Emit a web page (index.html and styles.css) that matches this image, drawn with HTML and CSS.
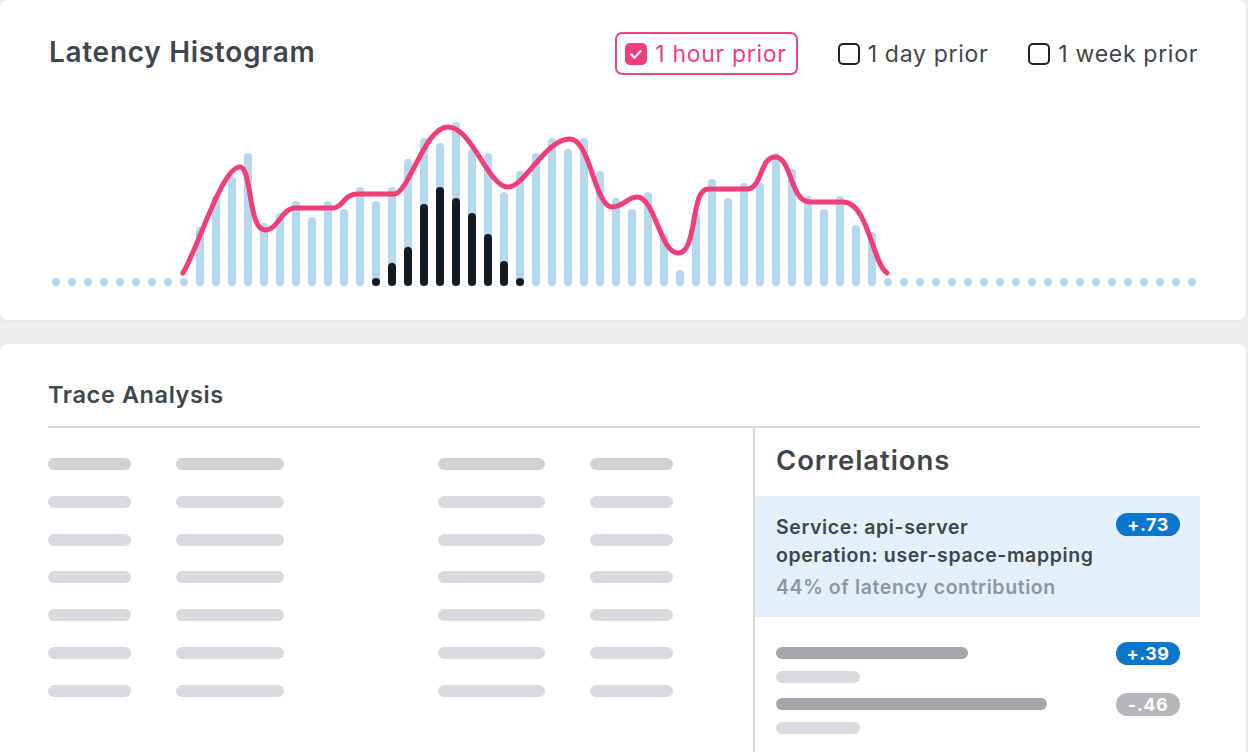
FILE: index.html
```html
<!DOCTYPE html>
<html>
<head>
<meta charset="utf-8">
<link rel="stylesheet" href="styles.css">
</head>
<body>
<div class="page">
  <section class="card card-hist">
    <header class="hist-head">
      <h1 class="title">Latency Histogram</h1>
      <div class="options">
        <label class="opt opt-on"><span class="box box-on"><svg viewBox="0 0 22 22" width="22" height="22"><path d="M6.2 11.4l3.3 3.3 6.3-6.6" fill="none" stroke="#fff" stroke-width="2.2" stroke-linecap="round" stroke-linejoin="round"/></svg></span><span class="opt-text">1 hour prior</span></label>
        <label class="opt"><span class="box"></span><span class="opt-text">1 day prior</span></label>
        <label class="opt"><span class="box"></span><span class="opt-text">1 week prior</span></label>
      </div>
    </header>
    <svg class="hist" viewBox="0 100 1246 200" width="1246" height="200">
      <g fill="#b5d8f0">
        <circle cx="56" cy="282" r="4"/><circle cx="72" cy="282" r="4"/><circle cx="88" cy="282" r="4"/><circle cx="104" cy="282" r="4"/><circle cx="120" cy="282" r="4"/><circle cx="136" cy="282" r="4"/><circle cx="152" cy="282" r="4"/><circle cx="168" cy="282" r="4"/><circle cx="184" cy="282" r="4"/>
        <circle cx="888" cy="282" r="4"/><circle cx="904" cy="282" r="4"/><circle cx="920" cy="282" r="4"/><circle cx="936" cy="282" r="4"/><circle cx="952" cy="282" r="4"/><circle cx="968" cy="282" r="4"/><circle cx="984" cy="282" r="4"/><circle cx="1000" cy="282" r="4"/><circle cx="1016" cy="282" r="4"/><circle cx="1032" cy="282" r="4"/><circle cx="1048" cy="282" r="4"/><circle cx="1064" cy="282" r="4"/><circle cx="1080" cy="282" r="4"/><circle cx="1096" cy="282" r="4"/><circle cx="1112" cy="282" r="4"/><circle cx="1128" cy="282" r="4"/><circle cx="1144" cy="282" r="4"/><circle cx="1160" cy="282" r="4"/><circle cx="1176" cy="282" r="4"/><circle cx="1192" cy="282" r="4"/>
      </g>
      <path fill="none" stroke="#b5d8f0" stroke-width="8" stroke-linecap="round" d="M200 231V282 M216 199V282 M232 180V282 M248 157V282 M264 227V282 M280 217V282 M296 205V282 M312 221V282 M328 205V282 M344 213V282 M360 191V282 M376 205V282 M392 191V282 M408 163V282 M424 142V282 M440 147V282 M456 126V282 M472 153V282 M488 157V282 M504 196V282 M520 175V282 M536 157V282 M552 142V282 M568 153V282 M584 142V282 M600 175V282 M616 202V282 M632 213V282 M648 196V282 M664 237V282 M680 274V282 M696 217V282 M712 183V282 M728 202V282 M744 187V282 M760 187V282 M776 157V282 M792 173V282 M808 200V282 M824 213V282 M840 200V282 M856 229V282 M872 236V282"/>
      <path fill="none" stroke="#151c21" stroke-width="8" stroke-linecap="round" d="M392 267V282 M408 251V282 M424 208V282 M440 191V282 M456 202V282 M472 217V282 M488 238V282 M504 265V282"/>
      <circle cx="376" cy="282" r="4" fill="#151c21"/>
      <circle cx="520" cy="282" r="4" fill="#151c21"/>
      <path fill="none" stroke="#f23d78" stroke-width="5" stroke-linecap="round" stroke-linejoin="round" d="M183 273 C198 248, 222 167, 240 167 C252 167, 248 230, 265 230 C278 230, 282 208, 295 208 L333 208 C343 208, 343 194, 358 194 L395 194 C410 190, 425 127, 448 127 C472 127, 488 187, 508 187 C525 187, 545 139, 570 139 C590 139, 595 207, 612 207 C623 207, 628 197, 637 197 C655 197, 660 253, 678 253 C698 253, 690 189, 708 189 L747 189 C762 189, 760 157, 775 157 C792 157, 790 202, 810 202 L843 202 C868 202, 872 262, 887 273"/>
    </svg>
  </section>

  <section class="card card-trace">
    <h2 class="sub">Trace Analysis</h2>
    <div class="trace-body">
      <div class="table">
        <span class="sk c1 dark"></span><span class="sk c2 dark"></span><span class="sk c3 dark"></span><span class="sk c4 dark"></span>
        <span class="sk c1"></span><span class="sk c2"></span><span class="sk c3"></span><span class="sk c4"></span>
        <span class="sk c1"></span><span class="sk c2"></span><span class="sk c3"></span><span class="sk c4"></span>
        <span class="sk c1"></span><span class="sk c2"></span><span class="sk c3"></span><span class="sk c4"></span>
        <span class="sk c1"></span><span class="sk c2"></span><span class="sk c3"></span><span class="sk c4"></span>
        <span class="sk c1"></span><span class="sk c2"></span><span class="sk c3"></span><span class="sk c4"></span>
        <span class="sk c1"></span><span class="sk c2"></span><span class="sk c3"></span><span class="sk c4"></span>
      </div>
      <aside class="corr">
        <h3 class="corr-title">Correlations</h3>
        <div class="corr-hi">
          <div class="corr-text">
            <div class="corr-line">Service: api-server</div>
            <div class="corr-line">operation: user-space-mapping</div>
            <div class="corr-line corr-muted">44% of latency contribution</div>
          </div>
          <span class="badge badge-blue">+.73</span>
        </div>
        <div class="corr-sk">
          <span class="bar-dark w1"></span><span class="badge badge-blue badge-mid">+.39</span>
          <span class="bar-light"></span>
        </div>
        <div class="corr-sk corr-sk2">
          <span class="bar-dark w2"></span><span class="badge badge-gray badge-mid">-.46</span>
          <span class="bar-light"></span>
        </div>
      </aside>
    </div>
  </section>
</div>
</body>
</html>
```

FILE: styles.css
```css
* { box-sizing: border-box; }
html, body { margin: 0; padding: 0; }
body {
  background: #eeeeee;
  font-family: Inter, "Liberation Sans", sans-serif;
  color: #3e464c;
  width: 1248px;
  height: 752px;
  overflow: hidden;
}
.page { width: 1246px; }

.card {
  background: #ffffff;
  border-radius: 8px;
  box-shadow: 0 1px 4px rgba(0, 0, 0, 0.05);
}
.card-hist { height: 320px; }

.hist-head {
  display: flex;
  align-items: center;
  justify-content: space-between;
  height: 75px;
  padding: 32px 48px 0 49px;
}
.title {
  margin: -4px 0 0 0;
  font-size: 28px;
  line-height: 32px;
  font-weight: 600;
  letter-spacing: 0.7px;
  color: #3f474d;
}
.options { display: flex; align-items: center; gap: 40px; }
.opt {
  display: flex;
  align-items: center;
  height: 43px;
  font-size: 23px;
  line-height: 28px;
  letter-spacing: 0.7px;
  color: #3e464c;
}
.opt-on {
  padding: 0 9px 0 8px;
  border: 2px solid #f0467f;
  border-radius: 7px;
  color: #f0407a;
}
.box {
  width: 22px;
  height: 22px;
  border: 2px solid #1d2429;
  border-radius: 5px;
  margin-right: 8px;
  flex: none;
}
.box svg { display: block; margin: -2px; }
.box-on { background: #f23d78; border-color: #f23d78; }

.hist { display: block; margin-top: 25px; }

.card-trace {
  margin-top: 24px;
  height: 440px;
  border-radius: 8px 8px 0 0;
  padding: 37px 46px 0 48px;
}
.sub {
  margin: 0;
  font-size: 23.5px;
  line-height: 28px;
  font-weight: 600;
  letter-spacing: 0.6px;
  color: #3f474d;
}
.trace-body {
  margin-top: 17px;
  border-top: 2px solid #d9d9d9;
  display: flex;
  height: 360px;
}
.table {
  width: 705px;
  padding-top: 30px;
  display: grid;
  grid-template-columns: 128px 262px 152px 163px;
  grid-auto-rows: 12px;
  row-gap: 25.8px;
  align-content: start;
}
.sk { display: block; height: 12px; border-radius: 6px; background: #d9dadd; }
.sk.dark { background: #d0d1d4; }
.c1 { width: 83px; }
.c2 { width: 108px; }
.c3 { width: 107px; }
.c4 { width: 83px; }

.corr {
  width: 447px;
  border-left: 2px solid #d9d9d9;
  padding-top: 16px;
}
.corr-title {
  margin: 0 0 20px 21px;
  font-size: 27.5px;
  line-height: 32px;
  font-weight: 600;
  letter-spacing: 0.9px;
  color: #3f474d;
}
.corr-hi {
  background: #e3f0f9;
  display: flex;
  justify-content: space-between;
  align-items: flex-start;
  padding: 17px 20px 16px 21px;
  height: 121px;
}
.corr-line {
  font-size: 19.5px;
  line-height: 28px;
  font-weight: 600;
  letter-spacing: 0.6px;
  color: #3e464c;
  white-space: nowrap;
}
.corr-muted { color: #8e979d; margin-top: 4px; }

.badge {
  display: inline-block;
  width: 64px;
  height: 23px;
  border-radius: 12px;
  color: #ffffff;
  font-size: 18px;
  line-height: 23px;
  font-weight: 700;
  letter-spacing: 0.5px;
  text-align: center;
  flex: none;
}
.badge-blue { background: #0a77cc; }
.badge-gray { background: #b4b6b9; }

.corr-sk {
  display: grid;
  grid-template-columns: 1fr 64px;
  grid-auto-rows: 12px;
  row-gap: 12px;
  padding: 0 20px 0 21px;
  margin-top: 30px;
}
.corr-sk2 { margin-top: 15px; }
.badge-mid { margin-top: -5.5px; }
.bar-dark { display: block; height: 12px; border-radius: 6px; background: #a3a6a9; }
.bar-light { display: block; width: 84px; height: 12px; border-radius: 6px; background: #d9dadd; }
.w1 { width: 192px; }
.w2 { width: 271px; }
```
